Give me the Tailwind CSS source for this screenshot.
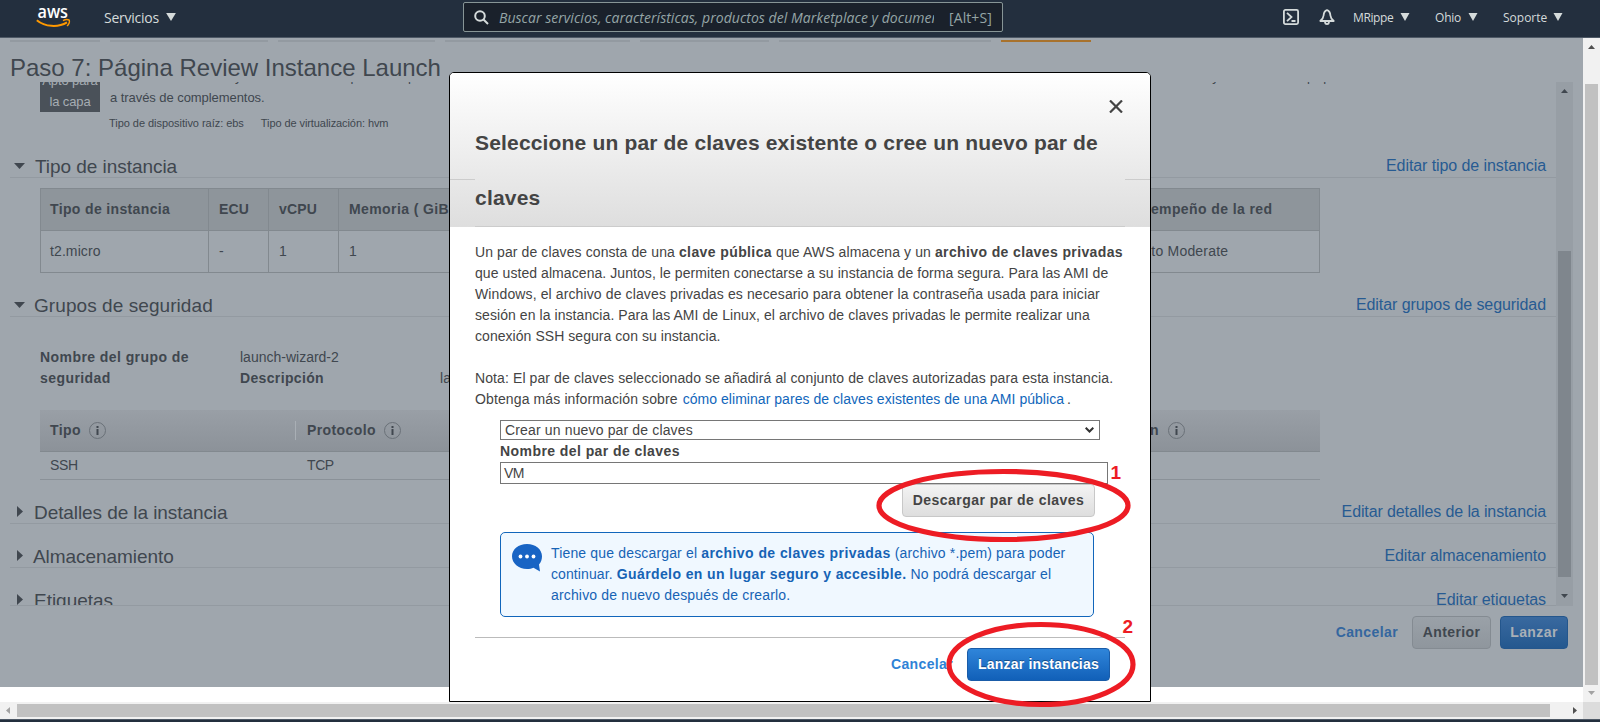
<!DOCTYPE html>
<html lang="es">
<head>
<meta charset="utf-8">
<title>Paso 7: Página Review Instance Launch</title>
<script src="https://cdn.jsdelivr.net/npm/@tailwindcss/browser@4"></script>
</head>
<body class="relative flex h-[722px] w-[1600px] flex-col overflow-hidden bg-white font-['Liberation_Sans',Arial,sans-serif] text-[14px] leading-[21px] tracking-[0.1px] text-[#40474f]">

<header class="flex h-[38px] shrink-0 items-start border-b border-[#4e5966] bg-[#232f3e] font-['Open_Sans',sans-serif] tracking-normal text-[#d5dbdb]">
  <svg class="ml-[36px] mt-[4px] h-[26px] w-[36px]" viewBox="0 0 36 26">
    <text x="1.500" y="13.500" font-family="Open Sans" font-size="18.500" font-weight="600" textLength="30.500" lengthAdjust="spacingAndGlyphs" fill="#fff">aws</text>
    <path d="M.8 16.200C9 23 22 23.800 31 18.300" fill="none" stroke="#f90" stroke-width="2"/>
    <path d="M27 16.700c2-1.100 5-1.200 6.300-.5.400 2-.7 4.600-2.300 5.800" fill="none" stroke="#f90" stroke-width="1.400"/>
  </svg>
  <div class="ml-[32px] flex h-[34px] w-[359px] items-center gap-[7px] tracking-[-0.25px]">Servicios
    <svg class="h-[8px] w-[10px]" viewBox="0 0 11 9"><path d="M0 0h11L5.500 9z" fill="#d5dbdb"/></svg>
  </div>
  <div class="mt-[2px] flex h-[30px] w-[540px] items-center rounded-[2px] border border-[#879596] bg-[#1a212b] text-[#95a5a6]">
    <svg class="ml-[10px] h-[15px] w-[15px]" viewBox="0 0 15 15" fill="none" stroke="#d5dbdb" stroke-width="2"><circle cx="6" cy="6" r="4.800"/><path d="M9.500 9.500l4.500 4.500"/></svg>
    <span class="ml-[10px] w-[435px] overflow-hidden whitespace-nowrap italic tracking-[0.04px]">Buscar servicios, características, productos del Marketplace y documentos</span>
    <span class="ml-[15px] tracking-[0.1px]">[Alt+S]</span>
  </div>
  <div class="ml-[280px] flex h-[34px] items-center text-[12px]">
    <svg class="h-[16px] w-[16px]" viewBox="0 0 16 16" fill="none" stroke="#d5dbdb" stroke-width="1.800"><rect x=".9" y=".9" width="14.200" height="14.200" rx="1.500"/><path d="M4 3.800L8.500 8 4 12.200M8.500 12h4"/></svg>
    <svg class="ml-[20px] h-[17px] w-[16px]" viewBox="0 0 16 17" fill="none" stroke="#d5dbdb" stroke-width="1.800"><path d="M8 1.200C5.500 2 4.800 4 4.600 6.500 4.400 9 3 10.500 1.300 12h13.400C13 10.500 11.600 9 11.400 6.500 11.200 4 10.500 2 8 1.200z" stroke-linejoin="round"/><path d="M6 12.500c0 3.500 4 3.500 4 0"/></svg>
    <span class="ml-[18px] w-[47px] tracking-[-0.4px]">MRippe</span>
    <svg class="h-[8px] w-[10px]" viewBox="0 0 9 8"><path d="M0 0h9L4.500 8z" fill="#d5dbdb"/></svg>
    <span class="ml-[25px] w-[33px] tracking-[-0.2px]">Ohio</span>
    <svg class="h-[8px] w-[10px]" viewBox="0 0 9 8"><path d="M0 0h9L4.500 8z" fill="#d5dbdb"/></svg>
    <span class="ml-[25px] w-[50px]">Soporte</span>
    <svg class="h-[8px] w-[10px]" viewBox="0 0 9 8"><path d="M0 0h9L4.500 8z" fill="#d5dbdb"/></svg>
  </div>
</header>

<div class="flex h-[664px] shrink-0">
  <main class="h-[649px] w-[1583px] bg-[#9fa6ad]">
    <div class="flex h-[16px] gap-[10px] pl-[10px] pt-[2px]">
      <i class="h-[2px] w-[90px] bg-[#939aa1]"></i><i class="h-[2px] w-[158px] bg-[#939aa1]"></i><i class="h-[2px] w-[157px] bg-[#939aa1]"></i><i class="h-[2px] w-[185px] bg-[#939aa1]"></i><i class="h-[2px] w-[129px] bg-[#939aa1]"></i><i class="h-[2px] w-[212px] bg-[#939aa1]"></i><i class="h-[2px] w-[90px] bg-[#a8722d]"></i>
    </div>
    <h1 class="h-[28px] pl-[10px] text-[24px] leading-[28px] tracking-normal">Paso 7: Página Review Instance Launch</h1>

    <div class="flex h-[524px] w-[1573px] overflow-hidden pl-[10px]">
      <div class="h-[524px] w-[1546px] overflow-hidden border-b border-[#939aa1]">
        <div class="flex h-[72px] pl-[30px] text-[13px]">
          <div class="h-[30px] w-[60px] overflow-hidden bg-[#4a5159] text-center leading-[21px] tracking-[-0.1px] text-[#a6adb3]"><div class="-mt-[12px] whitespace-nowrap">Apto para<br>la capa</div></div>
          <div class="ml-[10px] -mt-[16px]">
            <div class="flex h-[21px] leading-[21px]"><span class="ml-[125px]">y</span><span class="ml-[109px]">p</span><span class="ml-[50px]">p</span><span class="ml-[797px]">y</span><span class="ml-[88px]">p</span><span class="ml-[9px]">p</span></div>
            <div class="leading-[21px] tracking-[-0.06px]">a través de complementos.</div>
            <div class="-ml-px mt-[5px] flex gap-[17px] text-[11px] leading-[20px] tracking-[-0.08px]"><span class="tracking-[-0.04px]">Tipo de dispositivo raíz: ebs</span><span>Tipo de virtualización: hvm</span></div>
          </div>
        </div>

        <section class="h-[139px]">
          <div class="flex h-[24px] items-center border-b border-[#939aa1]">
            <svg class="ml-[4px] h-[6px] w-[11px]" viewBox="0 0 11 6"><path d="M0 0h11L5.500 6z" fill="#40474f"/></svg>
            <h2 class="ml-[10px] grow pt-[2px] text-[19px] tracking-[-0.05px]">Tipo de instancia</h2>
            <a class="pr-[10px] text-[16px] tracking-[-0.08px] text-[#275b92]">Editar tipo de instancia</a>
          </div>
          <div class="ml-[30px] mt-[10px] grid h-[85px] w-[1280px] grid-cols-[168px_60px_70px_742px_1fr] grid-rows-[42px_42px] border border-[#82898f] leading-[41px]">
            <b class="border-b border-r border-[#82898f] bg-[#8e959b] pl-[9px] tracking-[0.36px]">Tipo de instancia</b>
            <b class="border-b border-r border-[#82898f] bg-[#8e959b] pl-[10px] tracking-[0.2px]">ECU</b>
            <b class="border-b border-r border-[#82898f] bg-[#8e959b] pl-[10px] tracking-[0.2px]">vCPU</b>
            <b class="border-b border-r border-[#82898f] bg-[#8e959b] pl-[10px] tracking-[0.4px]">Memoria ( GiB )</b>
            <b class="border-b border-[#82898f] bg-[#8e959b] pl-[43px] tracking-[0.4px]">Desempeño de la red</b>
            <span class="border-r border-[#82898f] pl-[9px] tracking-[0.1px]">t2.micro</span>
            <span class="border-r border-[#82898f] pl-[10px]">-</span>
            <span class="border-r border-[#82898f] pl-[10px]">1</span>
            <span class="border-r border-[#82898f] pl-[10px]">1</span>
            <span class="pl-[40px] tracking-[0.2px]">Low to Moderate</span>
          </div>
        </section>

        <section class="h-[207px]">
          <div class="flex h-[24px] items-center border-b border-[#939aa1]">
            <svg class="ml-[4px] h-[6px] w-[11px]" viewBox="0 0 11 6"><path d="M0 0h11L5.500 6z" fill="#40474f"/></svg>
            <h2 class="ml-[9px] grow pt-[2px] text-[19px] tracking-[0.07px]">Grupos de seguridad</h2>
            <a class="pr-[10px] text-[16px] tracking-[-0.08px] text-[#275b92]">Editar grupos de seguridad</a>
          </div>
          <div class="ml-[30px] mt-[30px] flex">
            <b class="w-[200px] tracking-[0.43px]">Nombre del grupo de<br>seguridad</b>
            <div class="w-[200px]"><span class="tracking-normal">launch-wizard-2</span><br><b class="tracking-[0.35px]">Descripción</b></div>
            <div class="pt-[21px]">launch-wizard-2 created</div>
          </div>
          <div class="ml-[30px] mt-[21px] w-[1280px]">
            <div class="flex h-[42px] items-center border-b border-[#82898f] bg-gradient-to-b from-[#999fa6] to-[#8c9299] tracking-[0.4px]">
              <b class="ml-[10px] w-[39px]">Tipo</b>
              <svg class="h-[17px] w-[17px]" viewBox="0 0 17 17"><circle cx="8.500" cy="8.500" r="8" fill="none" stroke="#6a7178"/><path d="M7.500 4h2v2h-2zM7.500 7h2v6h-2z" fill="#40474f"/></svg>
              <i class="ml-[189px] h-[19px] w-px bg-[#a9afb5]"></i>
              <b class="ml-[11px] w-[77px]">Protocolo</b>
              <svg class="h-[17px] w-[17px]" viewBox="0 0 17 17"><circle cx="8.500" cy="8.500" r="8" fill="none" stroke="#6a7178"/><path d="M7.500 4h2v2h-2zM7.500 7h2v6h-2z" fill="#40474f"/></svg>
              <b class="w-[767px] pr-[9px] text-right">Descripción</b>
              <svg class="h-[17px] w-[17px]" viewBox="0 0 17 17"><circle cx="8.500" cy="8.500" r="8" fill="none" stroke="#6a7178"/><path d="M7.500 4h2v2h-2zM7.500 7h2v6h-2z" fill="#40474f"/></svg>
            </div>
            <div class="flex h-[28px] items-center border-b border-[#8a9198] pl-[10px] tracking-[-0.4px]"><span class="w-[257px]">SSH</span><span>TCP</span></div>
          </div>
        </section>

        <section class="h-[44px]">
          <div class="flex h-[24px] items-center border-b border-[#939aa1]">
            <svg class="ml-[7px] h-[11px] w-[6px]" viewBox="0 0 6 11"><path d="M0 0v11L6 5.500z" fill="#40474f"/></svg>
            <h2 class="ml-[11px] grow pt-[2px] text-[19px] tracking-[-0.08px]">Detalles de la instancia</h2>
            <a class="pr-[10px] text-[16px] tracking-[-0.12px] text-[#275b92]">Editar detalles de la instancia</a>
          </div>
        </section>
        <section class="h-[44px]">
          <div class="flex h-[24px] items-center border-b border-[#939aa1]">
            <svg class="ml-[7px] h-[11px] w-[6px]" viewBox="0 0 6 11"><path d="M0 0v11L6 5.500z" fill="#40474f"/></svg>
            <h2 class="ml-[10px] grow pt-[2px] text-[19px] tracking-[-0.05px]">Almacenamiento</h2>
            <a class="pr-[10px] text-[16px] tracking-[-0.1px] text-[#275b92]">Editar almacenamiento</a>
          </div>
        </section>
        <section class="h-[44px]">
          <div class="flex h-[24px] items-center border-b border-[#939aa1]">
            <svg class="ml-[7px] h-[11px] w-[6px]" viewBox="0 0 6 11"><path d="M0 0v11L6 5.500z" fill="#40474f"/></svg>
            <h2 class="ml-[11px] grow pt-[2px] text-[19px] tracking-[-0.02px]">Etiquetas</h2>
            <a class="pr-[10px] text-[16px] tracking-[-0.08px] text-[#275b92]">Editar etiquetas</a>
          </div>
        </section>
      </div>
      <div class="flex w-[17px] flex-col items-center bg-[#979ea5]">
        <svg class="mt-[7px] h-[4px] w-[7px]" viewBox="0 0 7 4"><path d="M3.500 0L7 4H0z" fill="#40474f"/></svg>
        <div class="mt-[158px] h-[326px] w-[13px] bg-[#7f868d]"></div>
        <svg class="mt-[17px] h-[4px] w-[7px]" viewBox="0 0 7 4"><path d="M0 0h7L3.500 4z" fill="#40474f"/></svg>
      </div>
    </div>

    <div class="mt-[10px] flex justify-end pr-[15px] font-bold leading-[31px] tracking-[0.4px]">
      <a class="mr-[14px] leading-[32px] text-[#34669f]">Cancelar</a>
      <span class="mr-[9px] h-[33px] w-[79px] rounded-[4px] border border-[#848b92] bg-gradient-to-b from-[#9aa1a8] to-[#8f969d] text-center">Anterior</span>
      <span class="h-[33px] w-[68px] rounded-[4px] border border-[#24568c] bg-gradient-to-b from-[#39699f] to-[#24588f] text-center text-[#a9b0b7]">Lanzar</span>
    </div>
  </main>
  <div class="flex w-[17px] flex-col items-center bg-[#f1f1f1]">
    <svg class="mt-[7px] h-[4px] w-[7px]" viewBox="0 0 7 4"><path d="M3.500 0L7 4H0z" fill="#505050"/></svg>
    <div class="mt-[35px] h-[601px] w-[13px] bg-[#c1c1c1]"></div>
    <svg class="mt-[6px] h-[4px] w-[7px]" viewBox="0 0 7 4"><path d="M0 0h7L3.500 4z" fill="#a3a3a3"/></svg>
  </div>
</div>
<div class="flex h-[17px] shrink-0 items-center bg-[#f1f1f1]">
  <svg class="ml-[6px] h-[7px] w-[4px]" viewBox="0 0 4 7"><path d="M4 0v7L0 3.500z" fill="#a3a3a3"/></svg>
  <div class="ml-[7px] h-[13px] w-[1533px] bg-[#c1c1c1]"></div>
  <svg class="ml-[23px] h-[7px] w-[4px]" viewBox="0 0 4 7"><path d="M0 0v7l4-3.500z" fill="#505050"/></svg>
  <div class="ml-auto h-[17px] w-[17px] bg-[#dcdcdc]"></div>
</div>
<footer class="h-[3px] border-t border-[#4e5966] bg-[#232f3e]"></footer>

<div class="absolute left-[449px] top-[72px] flex h-[630px] w-[702px] flex-col rounded-t-[5px] border border-black bg-white text-[#444]">
  <div class="relative h-[154px] shrink-0 rounded-t-[4px] bg-gradient-to-b from-white to-[#dedede] px-[25px] pt-[42px]">
    <h3 class="h-[112px] whitespace-nowrap border-b border-[#ccc] text-[21px] font-bold leading-[55px] tracking-[0.17px]">Seleccione un par de claves existente o cree un nuevo par de<br><span class="tracking-[0.2px]">claves</span></h3>
    <i class="absolute left-0 top-[106px] h-px w-[25px] bg-[#ccc]"></i><i class="absolute right-0 top-[106px] h-px w-[25px] bg-[#ccc]"></i>
    <svg class="absolute right-[27px] top-[27px] h-[13px] w-[14px]" viewBox="0 0 14 13"><path d="M1 .5l12 12M13 .5l-12 12" stroke="#444" stroke-width="2.200"/></svg>
  </div>
  <div class="mt-[15px] whitespace-nowrap pl-[25px]">
    <p><span class="tracking-[0.1px]">Un par de claves consta de una <b class="tracking-[0.4px]">clave pública</b> que AWS almacena y un <b class="tracking-[0.38px]">archivo de claves privadas</b></span><br>
    <span class="tracking-[0.07px]">que usted almacena. Juntos, le permiten conectarse a su instancia de forma segura. Para las AMI de</span><br>
    <span class="tracking-[0.12px]">Windows, el archivo de claves privadas es necesario para obtener la contraseña usada para iniciar</span><br>
    <span class="tracking-[0.07px]">sesión en la instancia. Para las AMI de Linux, el archivo de claves privadas le permite realizar una</span><br>
    <span class="tracking-[0.05px]">conexión SSH segura con su instancia.</span></p>
    <p class="mt-[21px]"><span class="tracking-[0.1px]">Nota: El par de claves seleccionado se añadirá al conjunto de claves autorizadas para esta instancia.</span><br>
    <span class="tracking-[0.12px]">Obtenga más información sobre</span> <a class="ml-[1px] tracking-[0.04px] text-[#1166bb]">cómo eliminar pares de claves existentes de una AMI pública</a><span class="ml-[3px]">.</span></p>
  </div>
  <div class="mt-[10px] flex flex-col pl-[50px]">
    <div class="flex h-[20px] w-[600px] items-center justify-between border border-[#767676] pl-[4px] pr-[5px]"><span class="tracking-[0.15px]">Crear un nuevo par de claves</span>
      <svg class="h-[6px] w-[9px]" viewBox="0 0 9 6" fill="none" stroke="#333" stroke-width="2"><path d="M.7.700l3.800 3.800L8.300.700"/></svg></div>
    <b class="h-[22px] leading-[23px] tracking-[0.43px]">Nombre del par de claves</b>
    <div class="h-[22px] w-[608px] border border-[#767676] pl-[3px] leading-[21px] tracking-[-0.5px]">VM</div>
    <span class="ml-[402px] h-[33px] w-[193px] rounded-[4px] border border-[#c8c8c8] bg-gradient-to-b from-[#f3f3f3] to-[#dedede] text-center font-bold leading-[31px] tracking-[0.45px]">Descargar par de claves</span>
    <div class="mt-[15px] flex h-[85px] w-[594px] rounded-[5px] border border-[#1166bb] bg-[#f0f8ff] whitespace-nowrap pl-[11px] pt-[10px] text-[#1663b5]">
      <svg class="mr-[9px] mt-px h-[28px] w-[30px]" viewBox="0 0 30 28"><path d="M15 0C6.500 0 0 5.300 0 12.300S6.500 25 15 25c2.500 0 4.800-.3 6.500-1.200L28 27.500 27 20.500c2-2.200 3-5 3-8.200C30 5.300 23.500 0 15 0z" fill="#1864c4"/><g fill="#fff"><circle cx="8.500" cy="12.500" r="1.900"/><circle cx="15" cy="12.500" r="1.900"/><circle cx="21.500" cy="12.500" r="1.900"/></g></svg>
      <p><span class="tracking-[0.16px]">Tiene que descargar el <b class="tracking-[0.43px]">archivo de claves privadas</b> <span class="tracking-[0.16px]">(archivo *.pem) para poder</span></span><br>continuar. <b class="tracking-[0.4px]">Guárdelo en un lugar seguro y accesible.</b> No podrá descargar el<br><span class="tracking-[0.16px]">archivo de nuevo después de crearlo.</span></p>
    </div>
  </div>
  <div class="ml-[25px] mt-[20px] flex h-[45px] w-[650px] justify-end border-t border-[#bbb] pr-[15px] pt-[10px] font-bold leading-[31px]">
    <a class="mr-[14px] leading-[32px] tracking-[0.36px] text-[#2e82d6]">Cancelar</a>
    <span class="h-[33px] w-[143px] rounded-[4px] border border-[#1a5ca8] bg-gradient-to-b from-[#2f85da] to-[#1160b8] text-center tracking-[0.2px] text-white [text-shadow:0_-1px_0_#00000059]">Lanzar instancias</span>
  </div>
</div>

<svg class="absolute left-0 top-0 h-[722px] w-[1600px]" viewBox="0 0 1600 722" fill="none" stroke="#ed1c24" stroke-width="5.200">
  <ellipse cx="1003.500" cy="505.500" rx="124.500" ry="34"/>
  <ellipse cx="1041" cy="664.500" rx="92" ry="40"/>
  <g fill="#ed1c24" stroke="none" font-family="Liberation Sans" font-size="19" font-weight="700"><text x="1110.500" y="479">1</text><text x="1122.500" y="633">2</text></g>
</svg>
</body>
</html>
